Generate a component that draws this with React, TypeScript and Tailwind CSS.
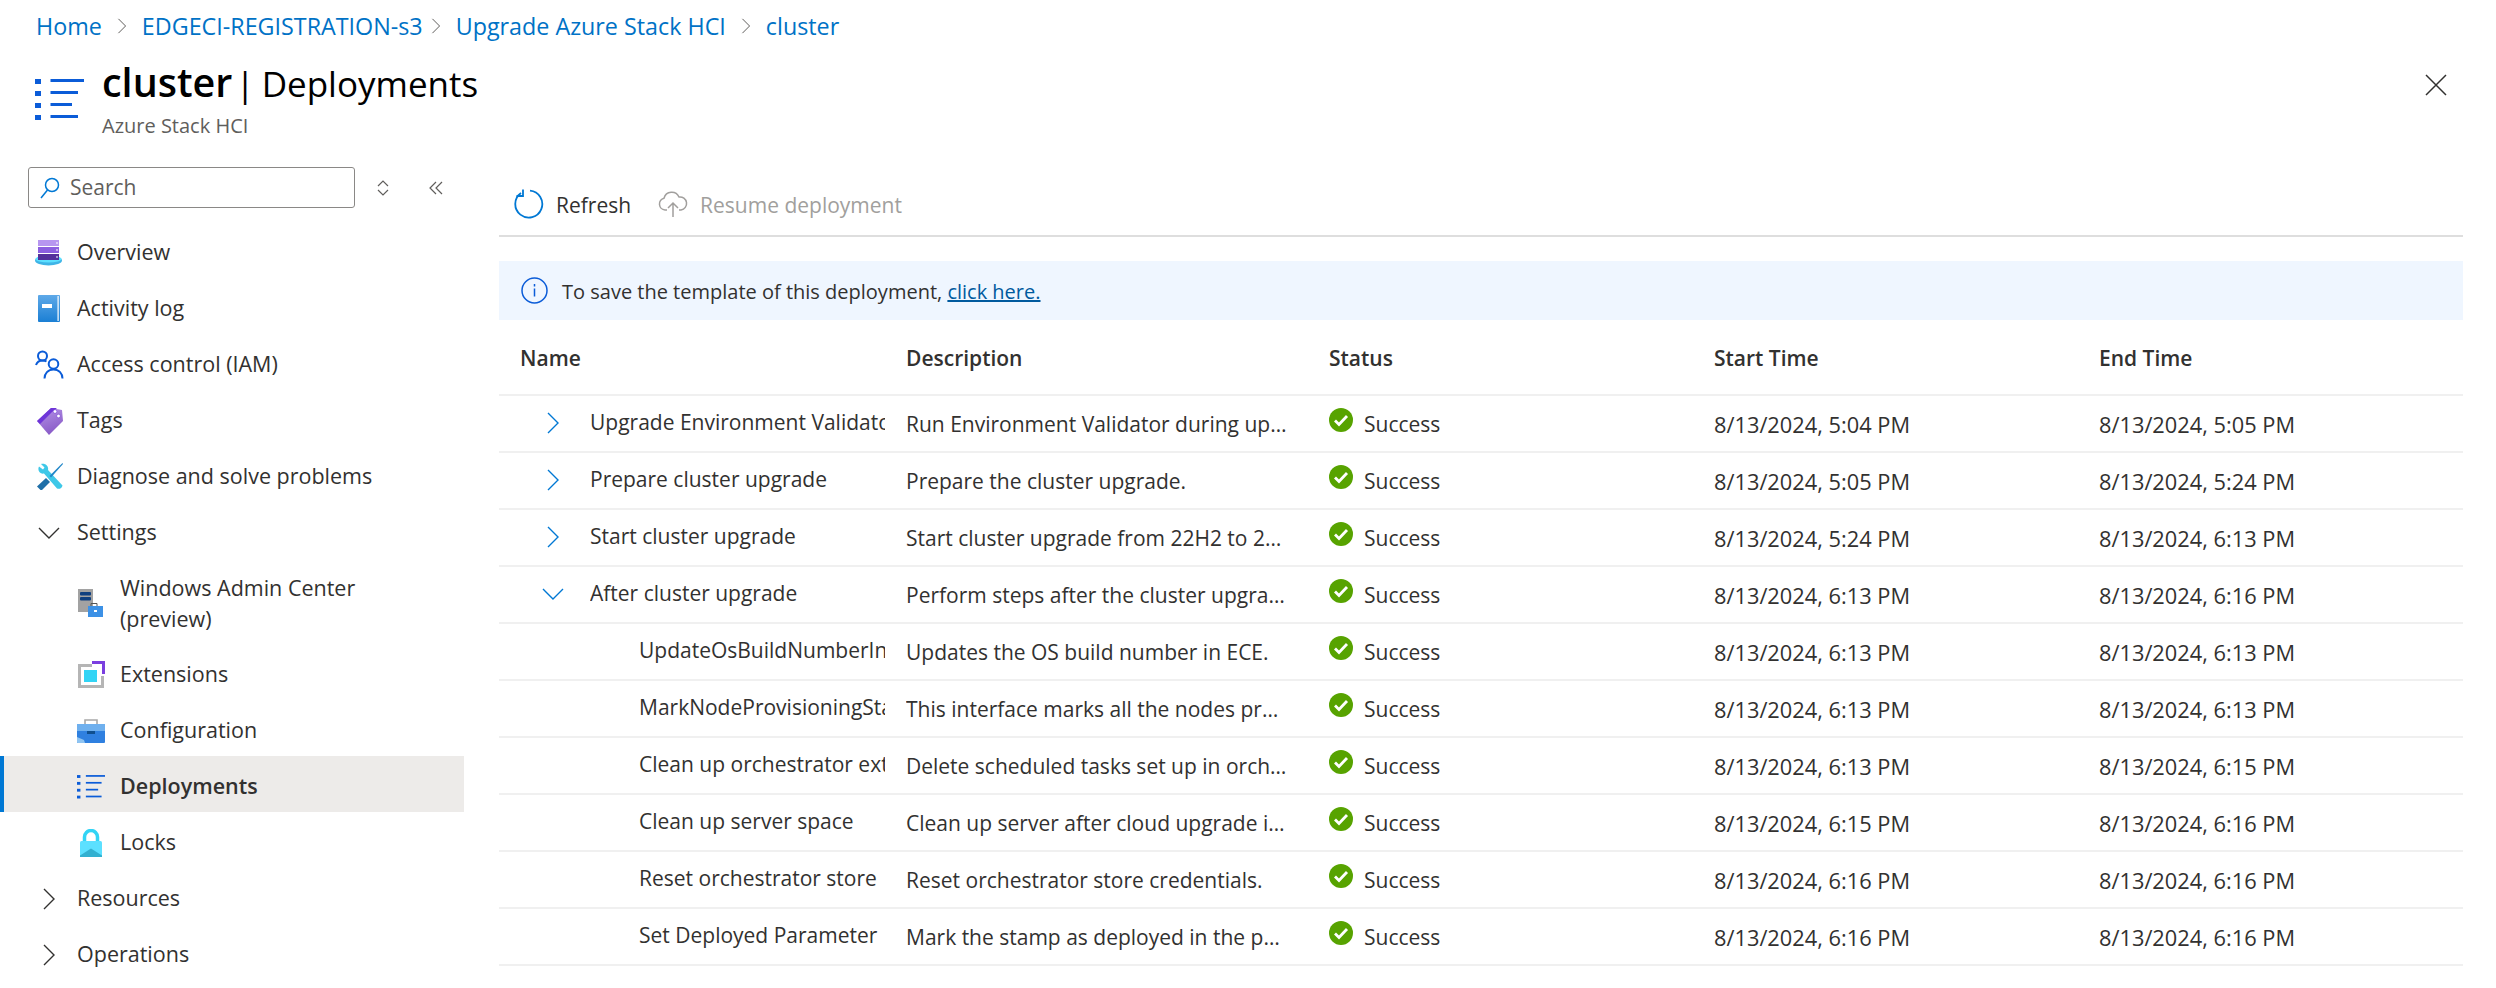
import type { ReactNode } from 'react';

const font = 'font-["Open_Sans","Noto_Sans",sans-serif]';

function ChevronRight({ className = 'text-[#323130]' }: { className?: string }) {
  return (
    <svg width="14" height="24" viewBox="0 0 14 24" fill="none" className={className}>
      <path d="M2 2l10 10L2 22" stroke="currentColor" strokeWidth="1.4" />
    </svg>
  );
}

function ChevronDown({ className = 'text-[#323130]' }: { className?: string }) {
  return (
    <svg width="24" height="14" viewBox="0 0 24 14" fill="none" className={className}>
      <path d="M2 2l10 10L22 2" stroke="currentColor" strokeWidth="1.4" />
    </svg>
  );
}

function ListIcon({ w = 28, h = 25 }: { w?: number; h?: number }) {
  return (
    <svg width={w} height={h} viewBox="0 0 49 42" fill="#0b5cd8">
      <rect x="0" y="1" width="6" height="5" />
      <rect x="0" y="13" width="6" height="5" />
      <rect x="0" y="25" width="6" height="5" />
      <rect x="0" y="37" width="6" height="5" />
      <rect x="15.500" y="1" width="33.500" height="3" />
      <rect x="15.500" y="13" width="27.500" height="3" />
      <rect x="15.500" y="25" width="21.500" height="3" />
      <rect x="15.500" y="37" width="27.500" height="3" />
    </svg>
  );
}

function OverviewIcon() {
  return (
    <svg width="27" height="26" viewBox="0 0 27 26">
      <ellipse cx="13.500" cy="20.500" rx="13.500" ry="5" fill="#3fb4e6" />
      <ellipse cx="13.500" cy="19" rx="13" ry="3.500" fill="#5ce0ff" />
      <rect x="3" y="0" width="21" height="6" fill="#b796f0" />
      <rect x="3" y="7" width="21" height="6" fill="#8c5fe0" />
      <rect x="3" y="14" width="21" height="6" fill="#53309c" />
      <rect x="21.500" y="2" width="1" height="2" fill="#fff" />
      <rect x="21.500" y="9" width="1" height="2" fill="#fff" />
      <rect x="21.500" y="16" width="1" height="2" fill="#fff" />
    </svg>
  );
}

function ActivityIcon() {
  return (
    <svg width="23" height="27" viewBox="0 0 23 27">
      <defs>
        <linearGradient id="book" x1="0" y1="0" x2="0" y2="1">
          <stop offset="0" stopColor="#5ea9e8" />
          <stop offset="1" stopColor="#1b7fd4" />
        </linearGradient>
      </defs>
      <rect x="0" y="0" width="22" height="27" rx="1" fill="url(#book)" />
      <rect x="19.500" y="1" width="1.200" height="25" fill="#fff" />
      <rect x="4" y="9" width="10" height="4" fill="#fff" />
    </svg>
  );
}

function AccessIcon() {
  return (
    <svg width="29" height="29" viewBox="0 0 29 29" fill="none" stroke="#0b5cd8" strokeWidth="2">
      <circle cx="7.500" cy="6" r="4.500" />
      <path d="M1 15c1-3 3-4.500 6.500-4.500 1.600 0 3 .3 4 1" />
      <circle cx="18.500" cy="14" r="4.800" />
      <path d="M9.500 28.500c0-5 3.500-9 9-9s9 4 9 9" />
    </svg>
  );
}

function TagIcon() {
  return (
    <svg width="26" height="28" viewBox="0 0 26 28">
      <defs>
        <linearGradient id="tag" x1="0" y1="0" x2="0.4" y2="1">
          <stop offset="0" stopColor="#b796e8" />
          <stop offset="1" stopColor="#8a5cc8" />
        </linearGradient>
      </defs>
      <path d="M0 14L14 1l11 2 1 11L12 28z" fill="url(#tag)" />
      <path d="M0 14L14 1l6 0-5 4L3 17z" fill="#6e35d8" />
      <circle cx="18" cy="4.500" r="1.800" fill="#fff" stroke="#6e35d8" strokeWidth="0.500" />
      <circle cx="21.500" cy="9" r="1.800" fill="#fff" stroke="#6e35d8" strokeWidth="0.500" />
    </svg>
  );
}

function ToolsIcon() {
  return (
    <svg width="26" height="27" viewBox="0 0 26 27" fill="none">
      <path d="M4 1l3.500 3.500-1.500 2L2 3.500C0 7.500 3 11.500 7 10.500L20 25.500c1.500.8 5 .5 5.500-3L11 7C12 3 8-.5 4 1z" fill="#3ec8e8" />
      <path d="M25.500 0L12.500 13l1.500 1.500L26 1z" fill="#1f86c8" />
      <path d="M0 23.500L9 15l4 4-8 8h-1.500z" fill="#1f6fa8" />
    </svg>
  );
}

function AdminIcon() {
  return (
    <svg width="25" height="28" viewBox="0 0 25 28">
      <rect x="0" y="0" width="15" height="23" fill="#a2a2a2" />
      <rect x="2" y="3" width="11" height="3.500" rx="1" fill="#0f3f7f" />
      <rect x="2" y="8" width="11" height="3.500" rx="1" fill="#0f3f7f" />
      <path d="M13 17v-2.500h6V17" fill="none" stroke="#555" strokeWidth="1" />
      <rect x="10" y="17" width="15" height="11" fill="#3c91e6" />
      <rect x="16" y="21" width="3" height="2" fill="#fff" />
    </svg>
  );
}

function ExtensionIcon() {
  return (
    <svg width="27" height="27" viewBox="0 0 27 27" fill="none">
      <path d="M14 4.500H1.500v21h23V15" stroke="#b5b5b5" strokeWidth="3" />
      <path d="M14 1.500h11.500V13" stroke="#7b3fe0" strokeWidth="3" />
      <rect x="6" y="9" width="13" height="12" fill="#32d4f5" />
    </svg>
  );
}

function ConfigIcon() {
  return (
    <svg width="28" height="24" viewBox="0 0 28 24">
      <path d="M8 6V1h12v5" fill="none" stroke="#a8a8a8" strokeWidth="1.600" />
      <rect x="0" y="5" width="28" height="19" rx="1" fill="#2f80e0" />
      <rect x="0" y="5" width="28" height="7" fill="#6fb0ee" />
      <rect x="10" y="12" width="8" height="3" fill="#0f4f8f" />
      <path d="M0 18l7 3 1 3H1a1 1 0 01-1-1z" fill="#8fc4f2" />
    </svg>
  );
}

function LockIcon() {
  return (
    <svg width="22" height="28" viewBox="0 0 22 28">
      <path d="M4.500 13V8a6.500 6.500 0 0113 0v5" fill="none" stroke="#32d4f5" strokeWidth="3.500" />
      <rect x="0" y="12" width="22" height="16" rx="1.500" fill="#5ce0ff" />
      <path d="M0 26.500l11-7 11 7V28H0z" fill="#32b0d0" />
    </svg>
  );
}

function SuccessIcon() {
  return (
    <svg width="24" height="24" viewBox="0 0 24 24" className="shrink-0">
      <circle cx="12" cy="12" r="12" fill="#57a300" />
      <path d="M6 12.500l4 4 8-8.500" fill="none" stroke="#fff" strokeWidth="2.800" />
    </svg>
  );
}

function NavRow({ icon, label, nested, active }: { icon: ReactNode; label: string; nested?: boolean; active?: boolean }) {
  const indent = active ? 'pl-[73px]' : nested ? 'pl-[77px]' : 'pl-[35px]';
  return (
    <div
      className={`flex h-[56px] items-center pt-[5px] ${indent} ${active ? 'border-l-[4px] border-[#0078d4] bg-[#edebe9] font-semibold' : ''}`}
    >
      <span className={`flex shrink-0 items-center ${nested ? 'w-[43px]' : 'w-[42px]'}`}>{icon}</span>
      <span>{label}</span>
    </div>
  );
}

function Sidebar() {
  return (
    <aside className="w-[464px] shrink-0 text-[21.500px] text-[#323130]">
      <div className="flex items-center pl-[28px]">
        <div className="flex h-[41px] w-[327px] items-center rounded-[3px] border border-[#8a8886] pl-[10px] text-[21px] text-[#605e5c]">
          <svg width="22" height="24" viewBox="0 0 22 24" fill="none" stroke="#0078d4" strokeWidth="1.500">
            <circle cx="13" cy="9" r="6.500" />
            <path d="M8.500 14L2 22" />
          </svg>
          <span className="ml-[9px]">Search</span>
        </div>
        <svg width="14" height="16" viewBox="0 0 14 16" fill="none" stroke="#605e5c" strokeWidth="1.200" className="ml-[21px]">
          <path d="M2 6l5-5 5 5M2 10l5 5 5-5" />
        </svg>
        <svg width="16" height="16" viewBox="0 0 16 16" fill="none" stroke="#605e5c" strokeWidth="1.200" className="ml-[38px]">
          <path d="M8 2L2 8l6 6M14 2L8 8l6 6" />
        </svg>
      </div>
      <nav className="mt-[14px]">
        <NavRow icon={<OverviewIcon />} label="Overview" />
        <NavRow icon={<span className="pl-[3px]"><ActivityIcon /></span>} label="Activity log" />
        <NavRow icon={<AccessIcon />} label="Access control (IAM)" />
        <NavRow icon={<span className="pl-[2px]"><TagIcon /></span>} label="Tags" />
        <NavRow icon={<span className="pl-[2px]"><ToolsIcon /></span>} label="Diagnose and solve problems" />
        <NavRow icon={<span className="pl-[2px]"><ChevronDown /></span>} label="Settings" />
        <div className="flex h-[86px] items-center pl-[77px] pt-[4px]">
          <span className="flex w-[43px] shrink-0 items-center pl-[1px]">
            <AdminIcon />
          </span>
          <span className="w-[280px] leading-[31px]">Windows Admin Center (preview)</span>
        </div>
        <NavRow nested icon={<span className="pl-[1px]"><ExtensionIcon /></span>} label="Extensions" />
        <NavRow nested icon={<ConfigIcon />} label="Configuration" />
        <NavRow nested active icon={<ListIcon />} label="Deployments" />
        <NavRow nested icon={<span className="pl-[3px]"><LockIcon /></span>} label="Locks" />
        <NavRow icon={<span className="pl-[7px]"><ChevronRight /></span>} label="Resources" />
        <NavRow icon={<span className="pl-[7px]"><ChevronRight /></span>} label="Operations" />
      </nav>
    </aside>
  );
}

type Step = { name: string; desc: string; start: string; end: string; state?: 'closed' | 'open' };

const steps: Step[] = [
  { name: 'Upgrade Environment Validator', desc: 'Run Environment Validator during upgrade.', start: '8/13/2024, 5:04 PM', end: '8/13/2024, 5:05 PM', state: 'closed' },
  { name: 'Prepare cluster upgrade', desc: 'Prepare the cluster upgrade.', start: '8/13/2024, 5:05 PM', end: '8/13/2024, 5:24 PM', state: 'closed' },
  { name: 'Start cluster upgrade', desc: 'Start cluster upgrade from 22H2 to 23H2 now.', start: '8/13/2024, 5:24 PM', end: '8/13/2024, 6:13 PM', state: 'closed' },
  { name: 'After cluster upgrade', desc: 'Perform steps after the cluster upgrade is done.', start: '8/13/2024, 6:13 PM', end: '8/13/2024, 6:16 PM', state: 'open' },
  { name: 'UpdateOsBuildNumberInECE', desc: 'Updates the OS build number in ECE.', start: '8/13/2024, 6:13 PM', end: '8/13/2024, 6:13 PM' },
  { name: 'MarkNodeProvisioningState', desc: 'This interface marks all the nodes provisioned.', start: '8/13/2024, 6:13 PM', end: '8/13/2024, 6:13 PM' },
  { name: 'Clean up orchestrator extension', desc: 'Delete scheduled tasks set up in orchestrator.', start: '8/13/2024, 6:13 PM', end: '8/13/2024, 6:15 PM' },
  { name: 'Clean up server space', desc: 'Clean up server after cloud upgrade is complete.', start: '8/13/2024, 6:15 PM', end: '8/13/2024, 6:16 PM' },
  { name: 'Reset orchestrator store', desc: 'Reset orchestrator store credentials.', start: '8/13/2024, 6:16 PM', end: '8/13/2024, 6:16 PM' },
  { name: 'Set Deployed Parameter', desc: 'Mark the stamp as deployed in the parameters.', start: '8/13/2024, 6:16 PM', end: '8/13/2024, 6:16 PM' },
];

const gridCols = 'grid grid-cols-[407px_423px_385px_385px_1fr]';

function StepRow({ step }: { step: Step }) {
  return (
    <div className={`${gridCols} h-[57px] items-center border-b-2 border-[#f0f0f0] pt-[3px] text-[#323130]`}>
      <div className={`flex items-center whitespace-nowrap pb-[4px] pr-[21px] ${step.state ? 'pl-[35px]' : 'pl-[140px]'}`}>
        {step.state === 'closed' && <span className="flex w-[56px] shrink-0 justify-center pr-[19px]"><ChevronRight className="text-[#0078d4]" /></span>}
        {step.state === 'open' && <span className="flex w-[56px] shrink-0 justify-center pr-[19px]"><ChevronDown className="text-[#0078d4]" /></span>}
        <span className="min-w-0 flex-1 overflow-hidden">{step.name}</span>
      </div>
      <div className="truncate pr-[41px]">{step.desc}</div>
      <div className="flex items-center gap-[11px]">
        <span className="-mt-[11px]"><SuccessIcon /></span>
        <span>Success</span>
      </div>
      <div className="text-[21.800px]">{step.start}</div>
      <div className="text-[21.800px]">{step.end}</div>
    </div>
  );
}

function Crumb() {
  return <ChevronRight className="h-[18px] w-[10px] text-[#605e5c]" />;
}

export default function App() {
  return (
    <div className={`${font} h-[988px] w-[2496px] overflow-hidden bg-white text-[21px] text-[#323130]`}>
      <div className="flex h-[52px] items-center pl-[36px] text-[23.300px] text-[#0072c6]">
        <span>Home</span>
        <span className="mx-[15px]"><Crumb /></span>
        <span>EDGECI-REGISTRATION-s3</span>
        <span className="ml-[8px] mr-[15px]"><Crumb /></span>
        <span>Upgrade Azure Stack HCI</span>
        <span className="mx-[15px]"><Crumb /></span>
        <span>cluster</span>
      </div>
      <div className="flex h-[95px] items-start pl-[35px] pt-[7px]">
        <div className="mt-[19px] w-[67px]"><ListIcon w={49} h={42} /></div>
        <div>
          <div className="flex items-baseline whitespace-nowrap text-[35px] leading-[46px] text-black">
            <span className="text-[39.500px] font-semibold">cluster</span>
            <span className="ml-[3px] mr-[7px]">|</span>
            <span>Deployments</span>
          </div>
          <div className="mt-[6px] text-[20px] leading-[26px] text-[#605e5c]">Azure Stack HCI</div>
        </div>
        <svg width="22" height="22" viewBox="0 0 22 22" fill="none" stroke="#323130" strokeWidth="1.500" className="ml-auto mr-[49px] mt-[15px]">
          <path d="M1 1l20 20M21 1L1 21" />
        </svg>
      </div>
      <div className="mt-[20px] flex">
        <Sidebar />
        <main className="ml-[35px] w-[1964px]">
          <div className="flex h-[70px] items-center border-b-2 border-[#dedede] pl-[15px] pt-[6px]">
            <svg width="30" height="30" viewBox="0 0 30 30" fill="none" stroke="#0078d4" strokeWidth="1.800">
              <path d="M16 1.600A13.500 13.500 0 117 4" />
              <path d="M9 .5v6.500H2.500" />
            </svg>
            <span className="ml-[12px] mt-[3px]">Refresh</span>
            <svg width="30" height="28" viewBox="0 0 30 28" fill="none" stroke="#a19f9d" strokeWidth="1.500" className="ml-[27px]">
              <path d="M9 20H7a6 6 0 01-1-11.800A8 8 0 0121 7a6.500 6.500 0 012 13h-2" />
              <path d="M15 27V13M10 18l5-5 5 5" />
            </svg>
            <span className="ml-[12px] mt-[3px] text-[#a19f9d]">Resume deployment</span>
          </div>
          <div className="mt-[24px] flex h-[59px] items-center bg-[#eff6ff] pl-[22px] text-[20px]">
            <svg width="27" height="27" viewBox="0 0 27 27" fill="none" stroke="#0b5cd8" strokeWidth="1.500">
              <circle cx="13.500" cy="13.500" r="12.500" />
              <path d="M13.500 11.500v8M13.500 7v2.500" />
            </svg>
            <span className="ml-[14px] pt-[2px]">To save the template of this deployment, <span className="text-[#005a9e] underline">click here.</span></span>
          </div>
          <div className={`${gridCols} h-[76px] items-center border-b-2 border-[#f0f0f0] pt-[3px] font-semibold`}>
            <div className="pl-[21px]">Name</div>
            <div>Description</div>
            <div>Status</div>
            <div>Start Time</div>
            <div>End Time</div>
          </div>
          {steps.map((s) => (
            <StepRow key={s.name} step={s} />
          ))}
        </main>
      </div>
    </div>
  );
}
